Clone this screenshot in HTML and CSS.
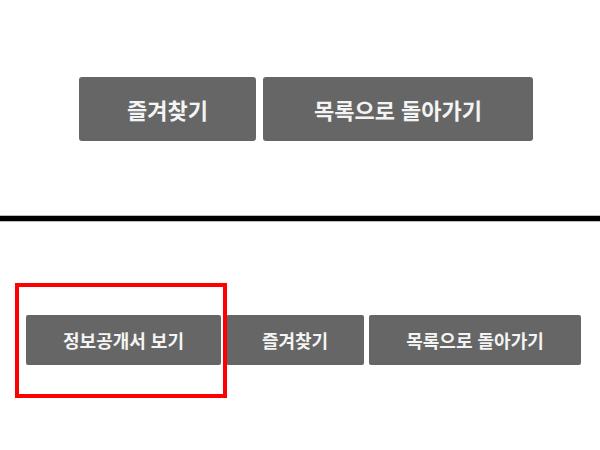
FILE: index.html
```html
<!DOCTYPE html>
<html lang="ko">
<head>
<meta charset="utf-8">
<link rel="stylesheet" href="styles.css">
</head>
<body>
<section class="top">
  <div class="btn btn-lg w-fav-lg">즐겨찾기</div>
  <div class="btn btn-lg w-list-lg">목록으로 돌아가기</div>
</section>
<hr class="rule">
<section class="bottom">
  <div class="mark-wrap">
    <div class="btn btn-sm w-info">정보공개서 보기</div>
    <div class="mark"></div>
  </div>
  <div class="btn btn-sm w-fav">즐겨찾기</div>
  <div class="btn btn-sm w-list">목록으로 돌아가기</div>
</section>
</body>
</html>
```

FILE: styles.css
```css
html, body {
  margin: 0;
  padding: 0;
  background: #fff;
  width: 600px;
  height: 450px;
  overflow: hidden;
  font-family: "Noto Sans CJK KR", "Noto Sans", sans-serif;
}
.top {
  height: 216px;
  box-sizing: border-box;
  padding: 77px 0 0 79px;
  display: flex;
  gap: 7px;
}
.rule {
  margin: 0;
  border: 0;
  height: 5px;
  background: #000;
  box-shadow: 0 -1px 0 #bbb, 0 1px 0 #bbb;
}
.bottom {
  box-sizing: border-box;
  padding: 94px 0 0 26px;
  display: flex;
  gap: 5px;
}
.btn {
  box-sizing: border-box;
  background: #666;
  color: #f4f4f4;
  font-weight: bold;
  display: flex;
  align-items: center;
  justify-content: center;
  white-space: nowrap;
}
.btn-lg {
  height: 64px;
  font-size: 22px;
  border-radius: 3px;
}
.btn-sm {
  height: 50px;
  font-size: 18px;
  border-radius: 2px;
}
.w-fav-lg { width: 177px; }
.w-list-lg { width: 270px; }
.w-info { width: 195px; }
.w-fav { width: 138px; }
.w-list { width: 212px; }
.mark-wrap {
  position: relative;
}
.mark {
  position: absolute;
  left: -11px;
  top: -32px;
  width: 212px;
  height: 115px;
  box-sizing: border-box;
  border: 4px solid #f00;
}
```
